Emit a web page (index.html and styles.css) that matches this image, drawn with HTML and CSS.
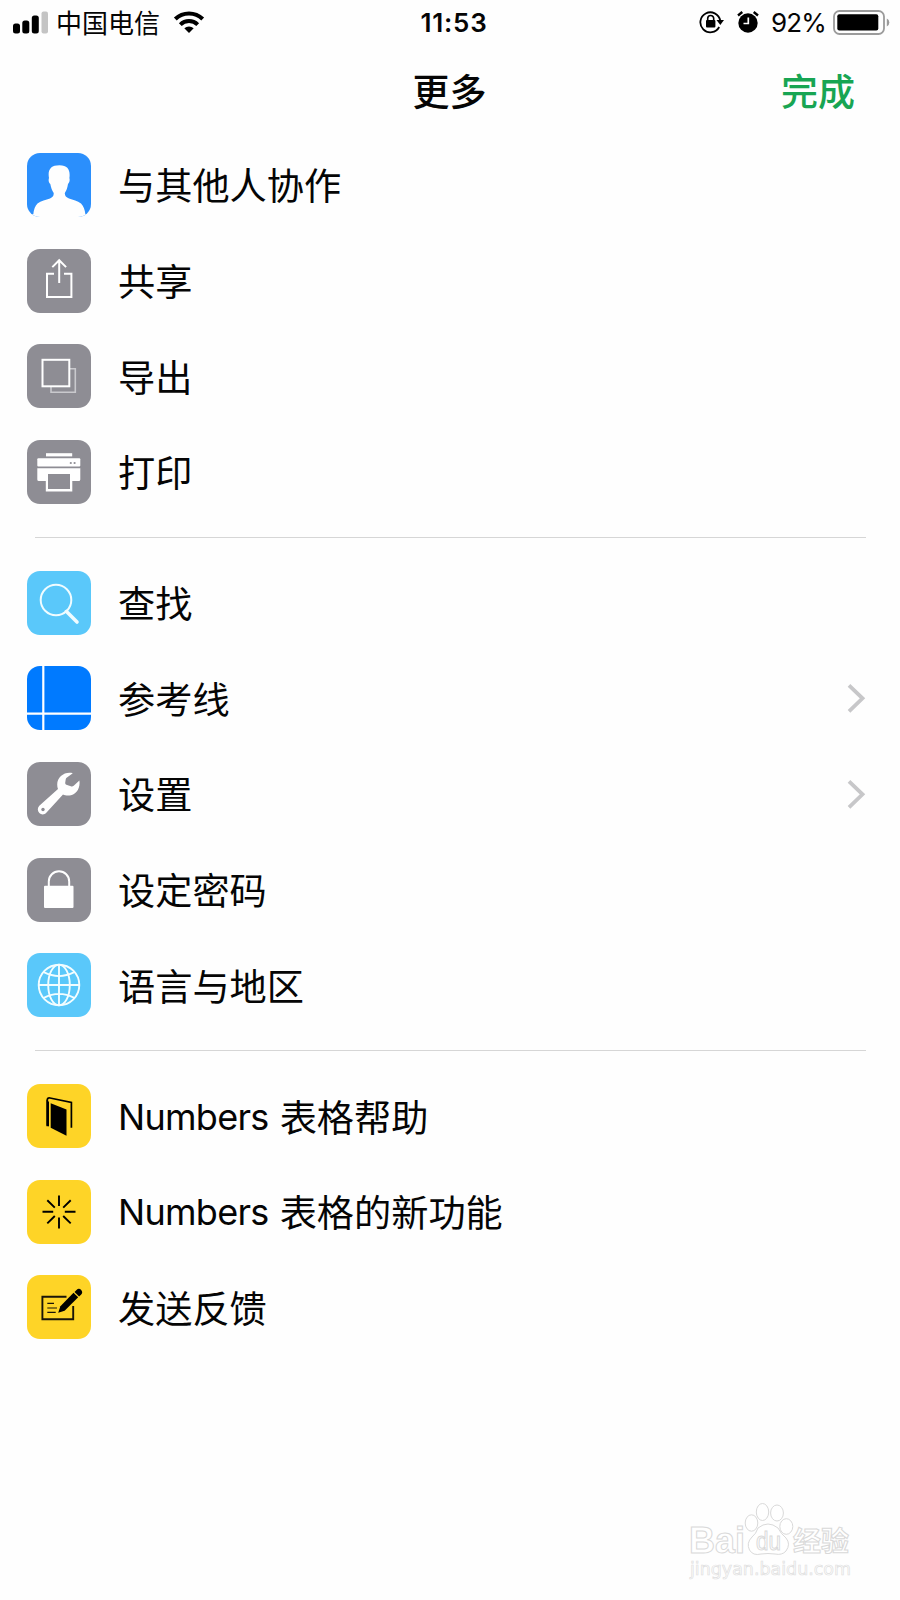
FILE: index.html
```html
<!DOCTYPE html>
<html lang="zh-CN">
<head>
  <meta charset="UTF-8" />
  <meta name="viewport" content="width=device-width, initial-scale=1.0"/>
  <title>更多</title>
  <link rel="stylesheet" href="styles.css">
</head>
<body>

  <div class="status">
    <div class="status-left">
      <svg class="signal" width="36" height="24" viewBox="0 0 36 24">
        <rect x="0" y="12.5" width="7" height="10" rx="2.5"/>
        <rect x="9.3" y="9.5" width="7" height="13" rx="2.5"/>
        <rect x="18.8" y="4.5" width="7" height="18" rx="2.5"/>
        <rect x="28.5" y="0.5" width="6.5" height="22" rx="2" fill="#c4c4c4"/>
      </svg>
      <span class="carrier">中国电信</span>
      <svg class="wifi" width="32" height="24" viewBox="0 0 32 24" fill="none" stroke="#000" stroke-width="4">
        <path d="M2.3 8A19.5 19.5 0 0 1 29.7 8"/>
        <path d="M7.3 13.6A12.5 12.5 0 0 1 24.7 13.6"/>
        <path d="M11.3 17.3A7 7 0 0 1 20.7 17.3L16 22Z" fill="#000" stroke="none"/>
      </svg>
    </div>
    <div class="time">11:53</div>
    <div class="status-right">
      <svg class="rotation" width="26" height="24" viewBox="0 0 26 24">
        <path d="M20.2 16A10 10 0 1 1 21.2 9.5" fill="none" stroke="#000" stroke-width="1.8"/>
        <path d="M17.5 9H25L21.3 14Z"/>
        <rect x="7" y="9" width="9.4" height="7.5" rx="1"/>
        <path d="M8.7 10V7.5a3 3 0 0 1 6 0V10" fill="none" stroke="#000" stroke-width="1.6"/>
      </svg>
      <svg class="alarm" width="22" height="24" viewBox="0 0 22 24">
        <circle cx="11" cy="12" r="9.7"/>
        <path d="M1 4.5L5.3 1M21 4.5L16.7 1" stroke="#000" stroke-width="2.4"/>
        <path d="M11.3 6.5V12.5H6.5" fill="none" stroke="#fff" stroke-width="1.7"/>
      </svg>
      <span class="percent">92%</span>
      <svg class="battery" width="57" height="26" viewBox="0 0 57 26">
        <rect x="1" y="1" width="50" height="23" rx="5.5" fill="none" stroke="#9b9b9b" stroke-width="1.8"/>
        <rect x="4.3" y="4.3" width="41" height="16.3" rx="2"/>
        <path d="M53.8 8.5Q56.3 9.5 56.3 12.5T53.8 16.5Z" fill="#9b9b9b"/>
      </svg>
    </div>
  </div>

  <div class="navbar">
    <div class="title">更多</div>
    <div class="done">完成</div>
  </div>

  <div class="menu">
    <div class="section">
      <div class="row">
        <svg class="icon sky" viewBox="0 0 64 64">
          <path fill="#fefefe" d="M0 65V61.3H6.3Q7 54 10.5 50.5C14 47.5 19 47 23 45.5Q27 44 26.7 40C25 37.5 24 34.5 23.3 31C21.5 29.5 21.3 27 22 25C20.5 17 23.5 12.3 32.5 12.3C41 12.3 43.5 17.5 42.4 25C43 27 42.6 29.5 41 31C40.5 34.5 39.5 37.5 37.8 40Q37.6 44 42 45.5C46 47 50.5 47.5 54 50.5Q57.5 54 58.4 61.3H64V65Z"/>
        </svg>
        <span class="label">与其他人协作</span>
      </div>
      <div class="row">
        <svg class="icon gray" viewBox="0 0 64 64" fill="none" stroke="#fff" stroke-width="2">
          <path d="M27 24.8H20V48H44.4V24.8H37M32.2 34V11.5M25.3 18.1L32.2 11.2L39.1 18.1"/>
        </svg>
        <span class="label">共享</span>
      </div>
      <div class="row">
        <svg class="icon gray" viewBox="0 0 64 64" fill="none" stroke="#fff" stroke-width="2">
          <path d="M43 24.8H48.3V48.3H24V43" stroke="#c9c9cd" stroke-width="1.6"/>
          <rect x="15.5" y="15.8" width="26.8" height="26.5"/>
        </svg>
        <span class="label">导出</span>
      </div>
      <div class="row">
        <svg class="icon gray" viewBox="0 0 64 64" fill="#fff">
          <rect x="19" y="13.2" width="26.2" height="3.2"/>
          <rect x="10.3" y="18.2" width="43" height="8.4" rx="1"/>
          <path d="M10.3 28.2H53.3V39.5Q53.3 41 51.8 41H45.3V51.5H18.8V41H11.8Q10.3 41 10.3 39.5Z"/>
          <rect x="21" y="34" width="22" height="15" fill="#8e8d94"/>
          <circle cx="43.8" cy="23" r="1.1" fill="#8e8d94"/>
          <circle cx="47.6" cy="23" r="1.1" fill="#8e8d94"/>
        </svg>
        <span class="label">打印</span>
      </div>
    </div>

    <div class="section">
      <div class="row">
        <svg class="icon cyan" viewBox="0 0 64 64" fill="none" stroke="#f0fcff">
          <circle cx="29" cy="29" r="15.3" stroke-width="2"/>
          <path d="M39.5 40.5L50 51" stroke-width="3.6" stroke-linecap="round"/>
        </svg>
        <span class="label">查找</span>
      </div>
      <div class="row">
        <svg class="icon blue" viewBox="0 0 64 64" stroke="#fff" stroke-width="2.2">
          <path d="M16.3 0V64M0 47.7H64"/>
        </svg>
        <span class="label">参考线</span>
        <svg class="chevron" width="20" height="30" viewBox="0 0 20 30"><path d="M3 2.3L16.5 15.3L3 28.3"/></svg>
      </div>
      <div class="row">
        <svg class="icon gray" viewBox="0 0 64 64">
          <path fill="#fff" d="M45.8 11.2C38 9.3 30.3 14.5 30.2 22.5Q30.2 25 31 27L12.3 43.8C10.3 45.8 10.3 49 12.3 51C14.3 53 17.5 52.8 19.3 50.8L36 32.5C38 33.5 41 34 44 33.2C50 31.8 53.5 25.5 52.4 18.5L46.7 23.8Q45.5 24.8 43.8 24.3L39.3 22.8Q38 22.2 38.2 20.8L38.7 17.4Q38.8 16.5 39.6 15.8Z"/>
          <circle cx="16" cy="47.5" r="1.7" fill="#8e8d94"/>
        </svg>
        <span class="label">设置</span>
        <svg class="chevron" width="20" height="30" viewBox="0 0 20 30"><path d="M3 2.3L16.5 15.3L3 28.3"/></svg>
      </div>
      <div class="row">
        <svg class="icon gray" viewBox="0 0 64 64">
          <rect x="17" y="27.7" width="29.5" height="22.3" rx="1" fill="#fff"/>
          <path d="M21.8 28V23.5a10.2 10.2 0 0 1 20.4 0V28" fill="none" stroke="#fff" stroke-width="2"/>
        </svg>
        <span class="label">设定密码</span>
      </div>
      <div class="row">
        <svg class="icon cyan" viewBox="0 0 64 64" fill="none" stroke="#f2fdff" stroke-width="1.9">
          <circle cx="32" cy="32" r="20.3"/>
          <ellipse cx="32" cy="32" rx="10.8" ry="20.3"/>
          <path d="M32 11.7V52.3M11.7 32H52.3M16.8 19.2Q32 27 47.2 19.2M16.8 44.8Q32 37 47.2 44.8"/>
        </svg>
        <span class="label">语言与地区</span>
      </div>
    </div>

    <div class="section">
      <div class="row">
        <svg class="icon yellow" viewBox="0 0 64 64">
          <path d="M23.7 19.2L39.5 25.5V51.7L23.7 43.8Z"/>
          <path d="M20.3 42.3V16Q20.3 13.5 23 14L44.4 18.4V43.8" fill="none" stroke="#000" stroke-width="1.7"/>
          <path d="M19.5 15.5L22 18V42.6L19.5 41.5Z"/>
        </svg>
        <span class="label"><span class="latin">Numbers</span>表格帮助</span>
      </div>
      <div class="row">
        <svg class="icon yellow" viewBox="0 0 64 64" stroke="#000" stroke-width="1.9">
          <path d="M32 26V15.4M32 37.6V48.4M26.2 31.8H15.5M37.8 31.8H48.5M27.8 27.6L20.3 20.2M36.2 27.6L43.7 20.2M27.8 36L20.3 43.4M36.2 36L43.7 43.4"/>
        </svg>
        <span class="label"><span class="latin">Numbers</span>表格的新功能</span>
      </div>
      <div class="row">
        <svg class="icon yellow" viewBox="0 0 64 64">
          <path d="M39.5 21.7H15.4V44.2H46.2V31" fill="none" stroke="#1a1508" stroke-width="1.9"/>
          <path d="M20.3 28.3H27M20.3 33H30M20.3 37.4H28.7" stroke="#1a1508" stroke-width="1.2"/>
          <path d="M31.2 37.8L33.4 31.3L46.5 17.7L51.2 22.2L37.6 35.8Z"/>
          <path d="M47.5 16.9L49.5 14.9Q52 12.8 54.2 15Q56.2 17.4 54.2 19.5L52.1 21.4Z"/>
        </svg>
        <span class="label">发送反馈</span>
      </div>
    </div>
  </div>

  <svg class="watermark" width="180" height="90" viewBox="0 0 180 90">
    <g fill="#fff" stroke="#d9d9d9" stroke-width="1">
      <text class="brand" x="9" y="53" textLength="56" lengthAdjust="spacingAndGlyphs">Bai</text>
      <ellipse cx="71.5" cy="23" rx="6.3" ry="8.2"/>
      <ellipse cx="82.5" cy="12" rx="6.2" ry="8.5"/>
      <ellipse cx="97" cy="13" rx="6.4" ry="8"/>
      <ellipse cx="106.3" cy="26.5" rx="6.5" ry="7.8"/>
      <path d="M78 28Q88 20 98 28Q101 34 106 38Q111 44 106 51Q102 55.5 95 54Q88 53 81 54Q73 56 69.5 50Q66 43 72 37Q76 34 78 28Z"/>
      <text class="du" x="76" y="50" textLength="25" lengthAdjust="spacingAndGlyphs">du</text>
      <text class="jingyan" x="113" y="51" textLength="56" lengthAdjust="spacingAndGlyphs">经验</text>
    </g>
    <text class="url" x="10" y="74.5" textLength="161" lengthAdjust="spacingAndGlyphs">jingyan.baidu.com</text>
  </svg>

</body>
</html>
```

FILE: styles.css
```css
body {
  margin: 0;
  height: 1600px;
  position: relative;
  overflow: hidden;
  background: #fefefe;
  color: #050505;
  font-family: Inter, "Noto Sans CJK SC", sans-serif;
}

.status {
  display: grid;
  grid-template-columns: 1fr auto 1fr;
  align-items: center;
  height: 45px;
  padding: 0 10px 0 13px;
}

.status-left, .status-right {
  display: flex;
  align-items: center;
}

.status-right {
  justify-content: flex-end;
}

.carrier {
  margin-left: 7px;
  padding-top: 3px;
  font-size: 26px;
  line-height: 36px;
}

.wifi {
  margin-left: 13px;
}

.time {
  padding-left: 5px;
  font-size: 26px;
  font-weight: 600;
  letter-spacing: 0.8px;
}

.alarm {
  margin-left: 12px;
}

.percent {
  margin: 0 7px 0 12px;
  font-size: 26px;
  letter-spacing: -0.8px;
}

.navbar {
  display: grid;
  grid-template-columns: 1fr auto 1fr;
  align-items: center;
  height: 90px;
  padding: 0 45px 2px 44px;
  font-size: 37px;
  font-weight: 500;
}

.title {
  grid-column: 2;
}

.done {
  justify-self: end;
  color: #18a553;
}

.section {
  padding: 0 34px 17px 27px;
}

/* hairline between groups, inset from the icons */
.section + .section::before {
  content: "";
  display: block;
  height: 1px;
  margin: 0 0 17px 8px;
  background: #d6d6d6;
}

.row {
  display: flex;
  align-items: center;
  height: 95.7px;
}

.icon {
  width: 64px;
  height: 64px;
  border-radius: 13px;
  flex: none;
}

.gray { background: #8e8d94; }
.sky { background: #2b8ffc; }
.cyan { background: #5ac8fa; }
.blue { background: #007aff; }
.yellow { background: #fed427; }

.label {
  margin-left: 27px;
  padding-top: 5px;
  font-size: 37.2px;
  line-height: 56px;
  white-space: nowrap;
}

.latin {
  margin-right: 11px;
  font-size: 36px;
  line-height: 1;
  letter-spacing: -0.7px;
  vertical-align: 2px;
}

.chevron {
  margin-left: auto;
  fill: none;
  stroke: #c7c7c9;
  stroke-width: 3.8;
}

.watermark {
  position: absolute;
  left: 680px;
  top: 1500px;
}

.brand {
  font-family: "Liberation Sans", sans-serif;
  font-size: 36px;
  font-weight: 700;
}

.du {
  font-family: "Liberation Sans", sans-serif;
  font-size: 25px;
}

.jingyan {
  font-family: "Liberation Sans", "Noto Sans CJK SC", sans-serif;
  font-size: 27px;
  font-weight: 700;
}

.url {
  font-family: "DejaVu Sans", sans-serif;
  font-size: 18px;
  fill: #fff;
  stroke: #dedede;
  stroke-width: 0.7px;
}
```
